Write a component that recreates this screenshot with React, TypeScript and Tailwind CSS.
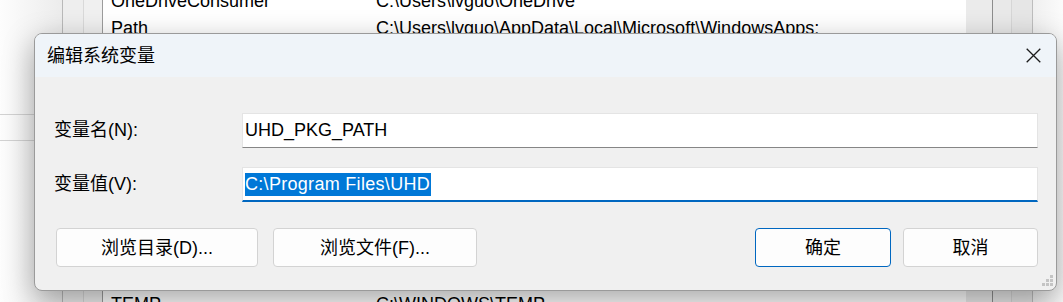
const font = "font-['Liberation_Sans','Noto_Sans_CJK_SC',sans-serif]";

function ListRow({ name, value }: { name: string; value: string }) {
  return (
    <div className="flex h-[27px] shrink-0 items-center whitespace-nowrap pl-[8px] text-[18px] leading-[27px] text-black">
      <div className="w-[265px] shrink-0">{name}</div>
      <div>{value}</div>
    </div>
  );
}

function Background() {
  return (
    <div className="flex h-full">
      <div className="flex w-[62px] shrink-0 flex-col bg-gradient-to-r from-[#fdfdfd] to-[#ececec] pt-[114px]">
        <div className="h-[27px] border-y border-[#d2d2d2]" />
      </div>
      <div className="w-[21px] shrink-0 border-l border-[#b9b9b9] bg-[#eeeeee]" />
      <div className="w-[19px] shrink-0 border-l border-[#d9d9d9] bg-[#f0f0f0]" />
      <div className="flex min-w-0 flex-1 flex-col overflow-hidden border-l border-[#9c9c9c] bg-white">
        <div className="-mt-[12px]">
          <ListRow name="OneDriveConsumer" value="C:\Users\lvguo\OneDrive" />
          <ListRow name="Path" value="C:\Users\lvguo\AppData\Local\Microsoft\WindowsApps;" />
          <ListRow name="TEMP" value="C:\Users\lvguo\AppData\Local\Temp" />
        </div>
        <div className="-mb-[16px] mt-auto">
          <ListRow name="TEMP" value="C:\WINDOWS\TEMP" />
        </div>
      </div>
      <div className="w-[26px] shrink-0 bg-[#ebebeb]" />
      <div className="w-[19px] shrink-0 border-l border-[#8d8d8d] bg-[#e9e9e9]" />
      <div className="w-[21px] shrink-0 border-l border-[#d6d6d6] bg-[#e6e6e6]" />
      <div className="w-[31px] shrink-0 border-l border-[#bdbdbd] bg-gradient-to-r from-[#f0f0f0] to-[#fbfbfb]" />
    </div>
  );
}

function Button({ label, primary, className }: { label: string; primary?: boolean; className: string }) {
  return (
    <button
      className={
        "flex h-[39px] items-center justify-center rounded-[4px] border bg-[#fdfdfd] text-[18px] leading-none text-black " +
        (primary ? "border-[#0067c0] " : "border-[#d3d3d3] ") +
        className
      }
    >
      {label}
    </button>
  );
}

export default function App() {
  return (
    <div className={"relative h-[302px] w-[1063px] overflow-hidden bg-white " + font}>
      <Background />

      <div className="absolute left-[34px] top-[33px] flex h-[258px] w-[1023px] flex-col overflow-hidden rounded-[8px] border border-[#9a9a9a] bg-[#f0f0f0] shadow-[0_10px_30px_rgba(0,0,0,0.35)]">
        <div className="flex h-[43px] shrink-0 items-center justify-between bg-[#eff4f9] pl-[12px] pr-[15px]">
          <span className="text-[18px] leading-none text-black">编辑系统变量</span>
          <svg width="15" height="15" viewBox="0 0 15 15" fill="none" stroke="#1b1b1b" strokeWidth="1.3">
            <path d="M0.7 0.7 14.3 14.3M14.3 0.7 0.7 14.3" />
          </svg>
        </div>

        <div className="flex flex-1 flex-col pl-[19px] pr-[18px] pt-[36px]">
          <div className="flex items-center">
            <div className="w-[188px] shrink-0 text-[18px] text-black">变量名(N):</div>
            <div className="flex h-[35px] flex-1 items-center border border-[#e4e4e4] border-b-[#868686] bg-white pl-[2px] text-[18px] text-black">
              UHD_PKG_PATH
            </div>
          </div>

          <div className="mt-[19px] flex items-center">
            <div className="w-[188px] shrink-0 text-[18px] text-black">变量值(V):</div>
            <div className="flex h-[35px] flex-1 items-center border border-b-2 border-[#e4e4e4] border-b-[#0067c0] bg-white pl-[2px] text-[18px]">
              <span className="bg-[#0078d7] pr-[1px] leading-[23px] tracking-[0.3px] text-white">C:\Program Files\UHD</span>
            </div>
          </div>

          <div className="mt-[26px] flex pl-[2px]">
            <Button label="浏览目录(D)..." className="w-[202px]" />
            <Button label="浏览文件(F)..." className="ml-[15px] w-[204px]" />
            <Button label="确定" primary className="ml-auto w-[136px]" />
            <Button label="取消" className="ml-[12px] w-[135px]" />
          </div>
        </div>

        <svg className="absolute bottom-[3px] right-[2px]" width="12" height="12" viewBox="0 0 12 12" fill="#c4c4c4">
          <rect x="8" y="0" width="3" height="3" />
          <rect x="4" y="4" width="3" height="3" />
          <rect x="8" y="4" width="3" height="3" />
          <rect x="0" y="8" width="3" height="3" />
          <rect x="4" y="8" width="3" height="3" />
          <rect x="8" y="8" width="3" height="3" />
        </svg>
      </div>
    </div>
  );
}
